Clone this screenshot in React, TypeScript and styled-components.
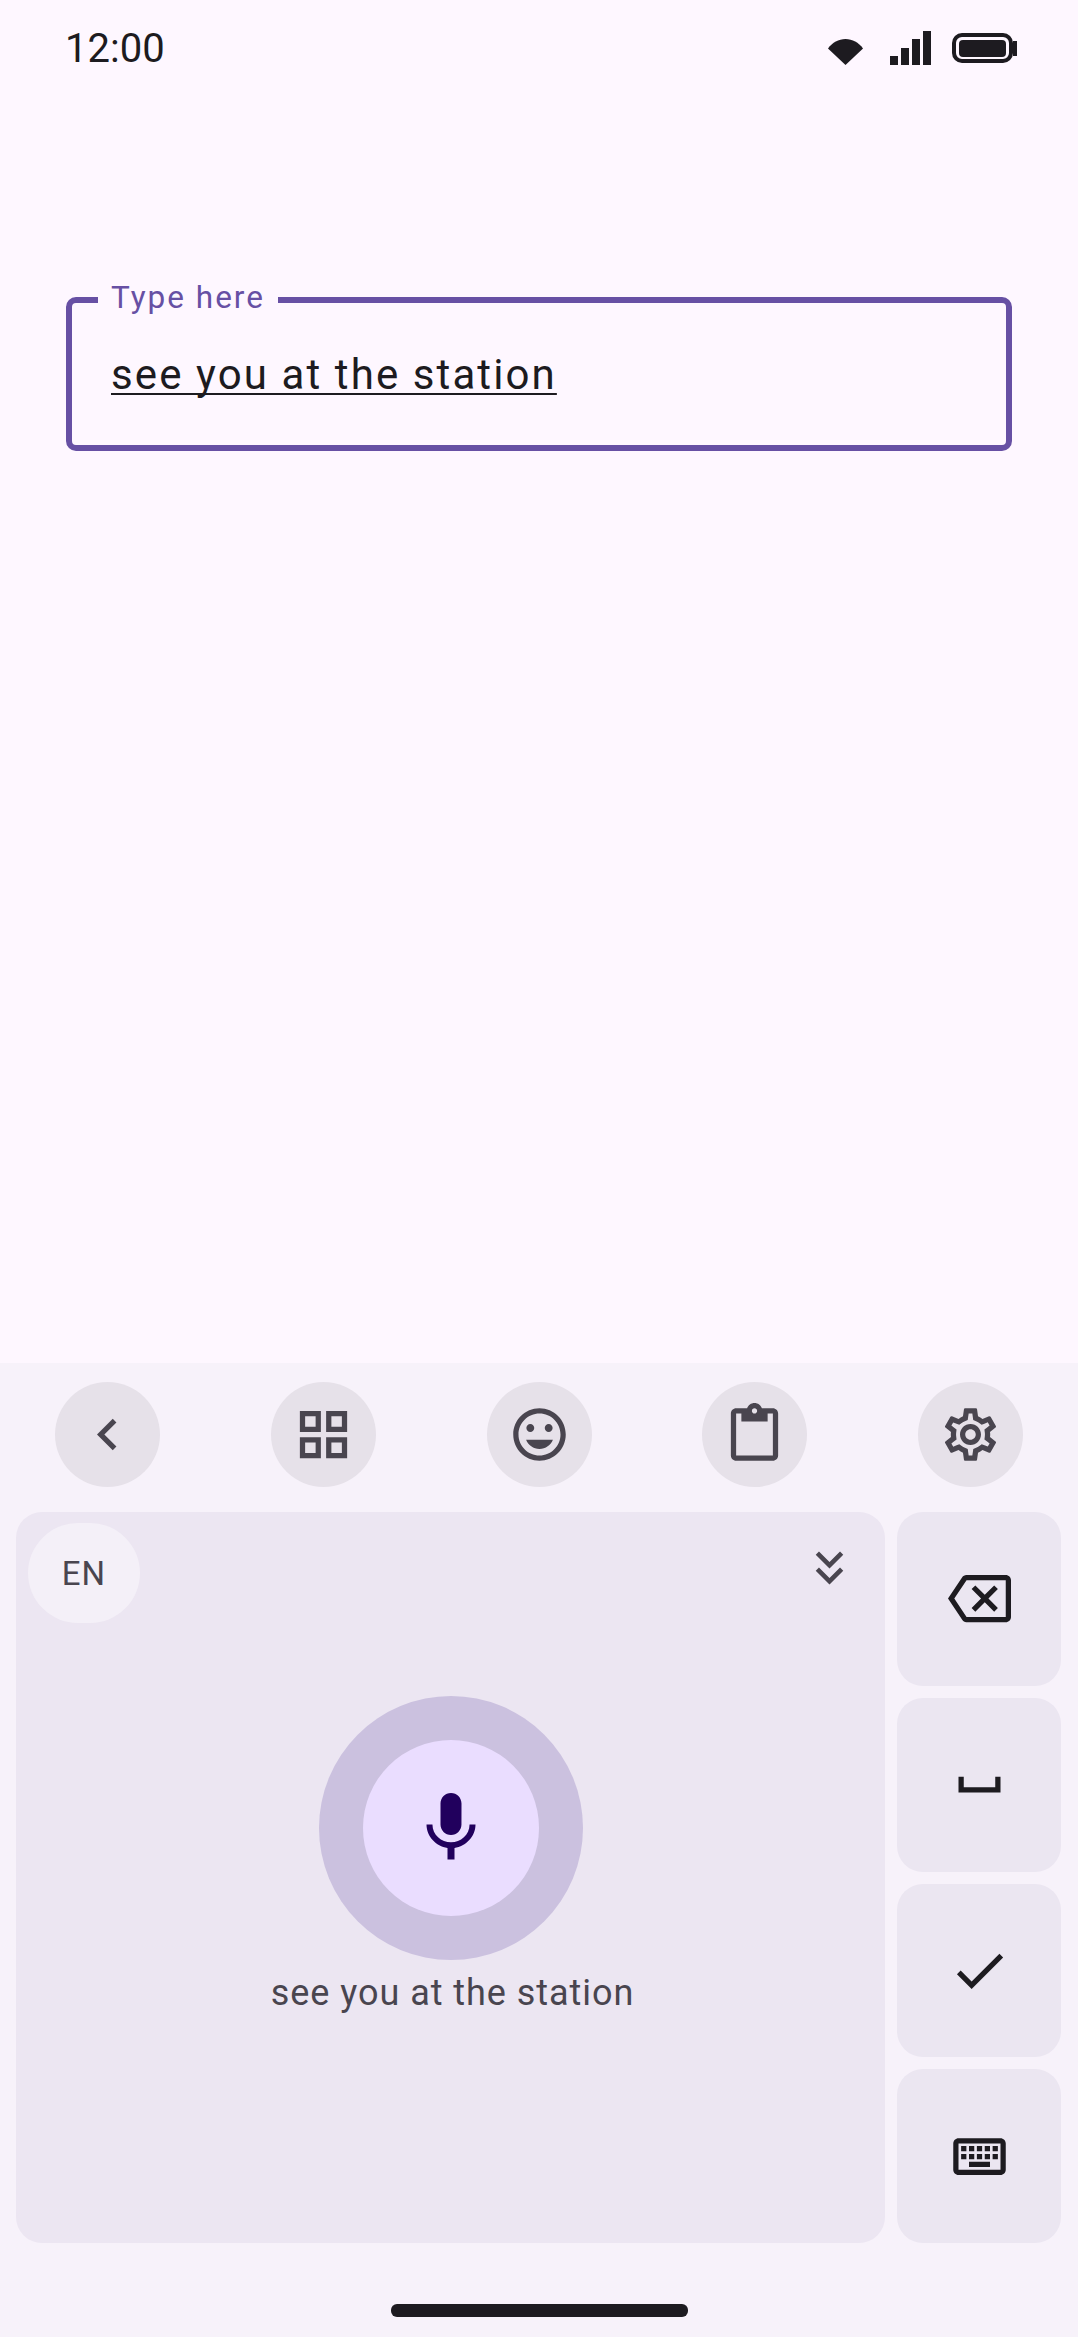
import React from "react";
import styled, { createGlobalStyle } from "styled-components";

const GlobalStyle = createGlobalStyle`
	html,
	body {
		margin: 0;
		padding: 0;
		background: #fef7ff;
	}
	* {
		box-sizing: border-box;
	}
`;

const Icon = ({ d, size = 63, color }: { d: string; size?: number; color?: string }) => (
	<svg width={size} height={size} viewBox="0 0 24 24" fill={color ?? "currentColor"}>
		<path d={d} />
	</svg>
);

const paths = {
	back: "M15.4 7.4 14 6l-6 6 6 6 1.4-1.4L10.8 12z",
	grid: "M3 3h8v8H3V3zm2 2v4h4V5H5zm8-2h8v8h-8V3zm2 2v4h4V5h-4zM3 13h8v8H3v-8zm2 2v4h4v-4H5zm8-2h8v8h-8v-8zm2 2v4h4v-4h-4z",
	emoji:
		"M11.99 2C6.47 2 2 6.48 2 12s4.47 10 9.99 10C17.52 22 22 17.52 22 12S17.52 2 11.99 2zM12 20c-4.42 0-8-3.58-8-8s3.58-8 8-8 8 3.58 8 8-3.58 8-8 8zm3.5-9c.83 0 1.5-.67 1.5-1.5S16.33 8 15.5 8 14 8.67 14 9.5s.67 1.5 1.5 1.5zm-7 0c.83 0 1.5-.67 1.5-1.5S9.33 8 8.5 8 7 8.67 7 9.5 7.67 11 8.5 11zm3.5 6.5c2.33 0 4.31-1.46 5.11-3.5H6.89c.8 2.04 2.78 3.5 5.11 3.5z",
	clipboard:
		"M19 2h-4.18C14.4.84 13.3 0 12 0c-1.3 0-2.4.84-2.82 2H5c-1.1 0-2 .9-2 2v16c0 1.1.9 2 2 2h14c1.1 0 2-.9 2-2V4c0-1.1-.9-2-2-2zm-7 0c.55 0 1 .45 1 1s-.45 1-1 1-1-.45-1-1 .45-1 1-1zm7 18H5V4h2v3h10V4h2v16z",
	gear:
		"M19.43 12.98c.04-.32.07-.64.07-.98 0-.34-.03-.66-.07-.98l2.11-1.65c.19-.15.24-.42.12-.64l-2-3.46c-.09-.16-.26-.25-.44-.25-.06 0-.12.01-.17.03l-2.49 1c-.52-.4-1.08-.73-1.69-.98l-.38-2.65C14.46 2.18 14.25 2 14 2h-4c-.25 0-.46.18-.49.42l-.38 2.65c-.61.25-1.17.59-1.69.98l-2.49-1c-.06-.02-.12-.03-.18-.03-.17 0-.34.09-.43.25l-2 3.46c-.13.22-.07.49.12.64l2.11 1.65c-.04.32-.07.65-.07.98 0 .33.03.66.07.98l-2.11 1.65c-.19.15-.24.42-.12.64l2 3.46c.09.16.26.25.44.25.06 0 .12-.01.17-.03l2.49-1c.52.4 1.08.73 1.69.98l.38 2.65c.03.24.24.42.49.42h4c.25 0 .46-.18.49-.42l.38-2.65c.61-.25 1.17-.59 1.69-.98l2.49 1c.06.02.12.03.18.03.17 0 .34-.09.43-.25l2-3.46c.12-.22.07-.49-.12-.64l-2.11-1.65zm-1.98-1.71c.04.31.05.52.05.73 0 .21-.02.43-.05.73l-.14 1.13.89.7 1.08.84-.7 1.21-1.27-.51-1.04-.42-.9.68c-.43.32-.84.56-1.25.73l-1.06.43-.16 1.13-.2 1.35h-1.4l-.19-1.35-.16-1.13-1.06-.43c-.43-.18-.83-.41-1.23-.71l-.91-.7-1.06.43-1.27.51-.7-1.21 1.08-.84.89-.7-.14-1.13c-.03-.31-.05-.54-.05-.74s.02-.43.05-.73l.14-1.13-.89-.7-1.08-.84.7-1.21 1.27.51 1.04.42.9-.68c.43-.32.84-.56 1.25-.73l1.06-.43.16-1.13.2-1.35h1.39l.19 1.35.16 1.13 1.06.43c.43.18.83.41 1.23.71l.91.7 1.06-.43 1.27-.51.7 1.21-1.07.85-.89.7.14 1.13zM12 8c-2.21 0-4 1.79-4 4s1.79 4 4 4 4-1.79 4-4-1.79-4-4-4zm0 6c-1.1 0-2-.9-2-2s.9-2 2-2 2 .9 2 2-.9 2-2 2z",
	doubleDown: "M18 6.41 16.59 5 12 9.58 7.41 5 6 6.41l6 6zM18 13.41 16.59 12 12 16.58 7.41 12 6 13.41l6 6z",
	backspace:
		"M22 3H7c-.69 0-1.23.35-1.59.88L0 12l5.41 8.11c.36.53.9.89 1.59.89h15c1.1 0 2-.9 2-2V5c0-1.1-.9-2-2-2zm0 16H7.07L2.4 12l4.66-7H22v14zM10.41 17 14 13.41 17.59 17 19 15.59 15.41 12 19 8.41 17.59 7 14 10.59 10.41 7 9 8.41 12.59 12 9 15.59z",
	space: "M18 9v4H6V9H4v6h16V9z",
	check: "M9 16.17 4.83 12l-1.42 1.41L9 19 21 7l-1.41-1.41z",
	keyboard:
		"M20 7v10H4V7h16m0-2H4c-1.1 0-1.99.9-1.99 2L2 17c0 1.1.9 2 2 2h16c1.1 0 2-.9 2-2V7c0-1.1-.9-2-2-2zm-9 3h2v2h-2zm0 3h2v2h-2zM8 8h2v2H8zm0 3h2v2H8zm-3 0h2v2H5zm0-3h2v2H5zm3 6h8v2H8zm6-3h2v2h-2zm0-3h2v2h-2zm3 3h2v2h-2zm0-3h2v2h-2z",
	mic: "M12 14c1.66 0 2.99-1.34 2.99-3L15 5c0-1.66-1.34-3-3-3S9 3.34 9 5v6c0 1.66 1.34 3 3 3zm5.3-3c0 3-2.54 5.1-5.3 5.1S6.7 14 6.7 11H5c0 3.41 2.72 6.23 6 6.72V21h2v-3.28c3.28-.48 6-3.3 6-6.72h-1.7z",
};

const App = () => {
	return (
		<Page>
			<GlobalStyle />
			<StatusBar>
				<Clock>12:00</Clock>
				<StatusIcons>
					<svg width="35" height="26" viewBox="0 0 35 26" fill="#1d1b20">
						<path d="M0 9.5C4.5 3.5 10.5 0 17.5 0S30.5 3.5 35 9.5L17.5 26z" />
					</svg>
					<svg width="41" height="34" viewBox="0 0 41 34" fill="#1d1b20">
						<rect x="0" y="25" width="8" height="9" />
						<rect x="11" y="17" width="8" height="17" />
						<rect x="22" y="8" width="8" height="26" />
						<rect x="33" y="0" width="8" height="34" />
					</svg>
					<svg width="65" height="30" viewBox="0 0 65 30" fill="#1d1b20">
						<rect x="2" y="2" width="57" height="26" rx="8" fill="none" stroke="#1d1b20" strokeWidth="4" />
						<rect x="7" y="7" width="47" height="17" rx="4" />
						<rect x="61" y="8" width="4" height="15" />
					</svg>
				</StatusIcons>
			</StatusBar>

			<Field>
				<FieldLabel>Type here</FieldLabel>
				<FieldText>see you at the station</FieldText>
			</Field>

			<Keyboard>
				<Toolbar>
					<ToolButton>
						<Icon d={paths.back} />
					</ToolButton>
					<ToolButton>
						<Icon d={paths.grid} />
					</ToolButton>
					<ToolButton>
						<Icon d={paths.emoji} />
					</ToolButton>
					<ToolButton>
						<Icon d={paths.clipboard} />
					</ToolButton>
					<ToolButton>
						<Icon d={paths.gear} />
					</ToolButton>
				</Toolbar>
				<KeyArea>
					<VoicePanel>
						<PanelTop>
							<LangPill>EN</LangPill>
							<Collapse>
								<Icon d={paths.doubleDown} size={55} />
							</Collapse>
						</PanelTop>
						<MicRing>
							<MicButton>
								<Icon d={paths.mic} size={84} />
							</MicButton>
						</MicRing>
						<Caption>see you at the station</Caption>
					</VoicePanel>
					<SideKeys>
						<SideKey>
							<Icon d={paths.backspace} />
						</SideKey>
						<SideKey>
							<Icon d={paths.space} />
						</SideKey>
						<SideKey>
							<Icon d={paths.check} />
						</SideKey>
						<SideKey>
							<Icon d={paths.keyboard} />
						</SideKey>
					</SideKeys>
				</KeyArea>
				<NavArea>
					<HomeBar />
				</NavArea>
			</Keyboard>
		</Page>
	);
};

export default App;

const Page = styled.div`
	width: 1078px;
	height: 2337px;
	display: flex;
	flex-direction: column;
	background: #fef7ff;
	font-family: Roboto, "Liberation Sans", sans-serif;
	overflow: hidden;
`;

const StatusBar = styled.div`
	height: 94px;
	padding: 0 61px 0 65px;
	display: flex;
	justify-content: space-between;
	align-items: center;
	flex-shrink: 0;
`;

const Clock = styled.span`
	padding-top: 2px;
	font-size: 40px;
	color: #1d1b20;
`;

const StatusIcons = styled.div`
	display: flex;
	align-items: flex-end;
	gap: 27px;
	padding-top: 2px;
	svg:last-child {
		margin-left: -6px;
		margin-bottom: 2px;
	}
`;

const Field = styled.div`
	position: relative;
	width: 946px;
	height: 154px;
	margin: 203px 0 0 66px;
	padding: 44px 0 0 39px;
	border: 6px solid #6750a4;
	border-radius: 10px;
	flex-shrink: 0;
`;

const FieldLabel = styled.span`
	position: absolute;
	top: -25px;
	left: 26px;
	padding: 0 13px;
	background: #fef7ff;
	font-size: 31.5px;
	line-height: 40px;
	letter-spacing: 2px;
	color: #6750a4;
`;

const FieldText = styled.span`
	font-size: 42px;
	line-height: 56px;
	letter-spacing: 2.1px;
	color: #1d1b20;
	text-decoration: underline;
	text-decoration-thickness: 2px;
	text-decoration-skip-ink: none;
	text-underline-offset: 4px;
`;

const Keyboard = styled.div`
	margin-top: auto;
	height: 974px;
	display: flex;
	flex-direction: column;
	background: #f7f2fa;
	flex-shrink: 0;
`;

const Toolbar = styled.div`
	height: 149px;
	padding: 19px 55px 0;
	display: flex;
	justify-content: space-between;
	align-items: flex-start;
`;

const ToolButton = styled.div`
	width: 105px;
	height: 105px;
	border-radius: 50%;
	background: #e6e1e9;
	color: #49454f;
	display: flex;
	align-items: center;
	justify-content: center;
`;

const KeyArea = styled.div`
	height: 731px;
	padding: 0 17px 0 16px;
	display: grid;
	grid-template-columns: 869px 164px;
	column-gap: 12px;
`;

const VoicePanel = styled.div`
	border-radius: 26px;
	background: #ece6f2;
	display: flex;
	flex-direction: column;
	align-items: center;
`;

const PanelTop = styled.div`
	align-self: stretch;
	padding: 11px 28px 0 12px;
	display: flex;
	justify-content: space-between;
	align-items: flex-start;
`;

const LangPill = styled.div`
	width: 112px;
	height: 100px;
	border-radius: 50px;
	background: #f4f0f8;
	color: #49454f;
	font-size: 33px;
	font-weight: 400;
	letter-spacing: 1px;
	display: flex;
	align-items: center;
	justify-content: center;
`;

const Collapse = styled.div`
	display: flex;
	margin-top: 17px;
	color: #49454f;
`;

const MicRing = styled.div`
	width: 264px;
	height: 264px;
	margin-top: 73px;
	border-radius: 50%;
	background: #cbc1df;
	display: flex;
	align-items: center;
	justify-content: center;
`;

const MicButton = styled.div`
	width: 176px;
	height: 176px;
	border-radius: 50%;
	background: #eaddff;
	color: #21005d;
	display: flex;
	align-items: center;
	justify-content: center;
`;

const Caption = styled.div`
	margin-top: 11px;
	padding-left: 4px;
	font-size: 36px;
	line-height: 44px;
	letter-spacing: 0.95px;
	color: #49454f;
`;

const SideKeys = styled.div`
	display: grid;
	grid-template-rows: repeat(4, 1fr);
	row-gap: 12px;
`;

const SideKey = styled.div`
	border-radius: 26px;
	background: #ebe6f1;
	color: #1d1b20;
	display: flex;
	align-items: center;
	justify-content: center;
`;

const NavArea = styled.div`
	flex: 1;
	display: flex;
	align-items: center;
	justify-content: center;
	padding-top: 41px;
`;

const HomeBar = styled.div`
	width: 297px;
	height: 13px;
	border-radius: 6px;
	background: #1d1b20;
`;
